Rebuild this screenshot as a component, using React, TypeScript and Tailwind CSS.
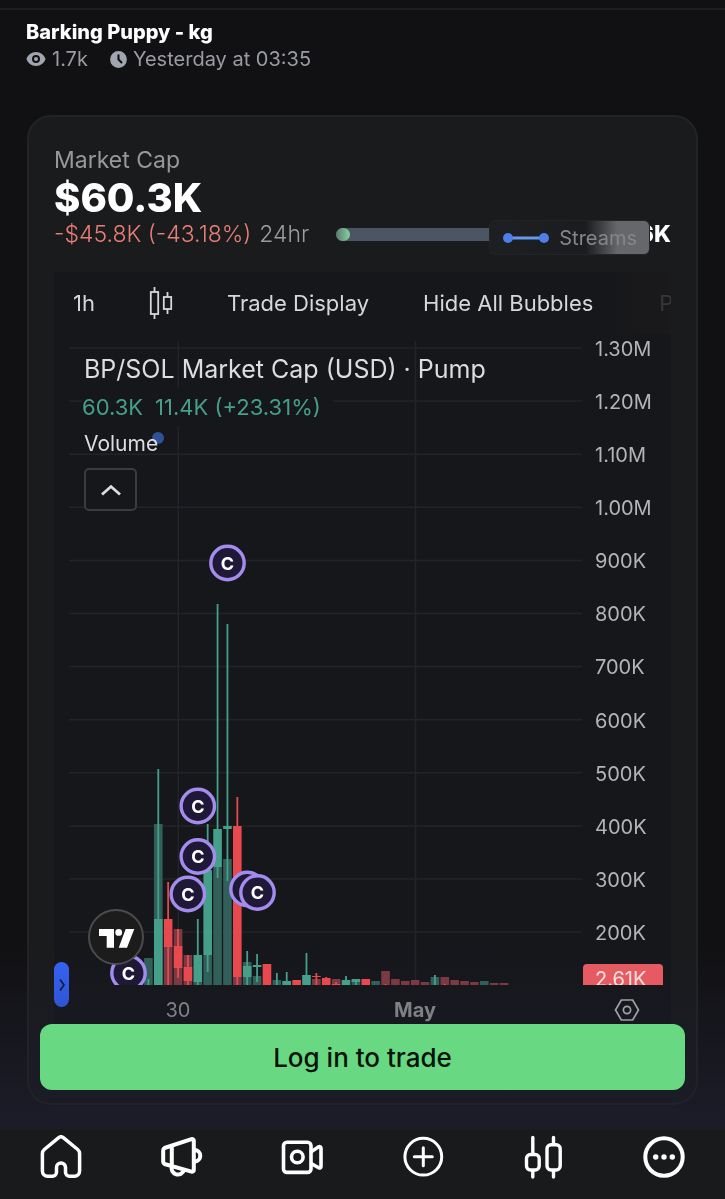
import React from "react";
import { HiClock, HiEye } from "react-icons/hi";

type Tone = "up" | "down";

interface Candle {
  tone: Tone;
  volume?: number;
  body?: [number, number];
  wick?: [number, number];
}

const PLOT_HEIGHT = 651;
const FIRST_X = 94.4;
const STEP = 9.88;
const BAR = 8.6;

const fills = { up: "#459f8a", down: "#e8494e" };
const volumeFills = { up: "#315f59", down: "#7b3a42" };

// All values are y positions inside the plot, volume is the top of the bar
const candles: Candle[] = [
  { tone: "up", volume: 624, wick: [645, 651] },
  { tone: "up", volume: 490, body: [585, 651], wick: [435, 651] },
  { tone: "down", volume: 612, body: [585, 613], wick: [548, 651] },
  { tone: "down", volume: 595, body: [612, 634], wick: [595, 644] },
  { tone: "down", volume: 621, body: [633, 647], wick: [621, 651] },
  { tone: "up", volume: 647, body: [621, 648], wick: [585, 651] },
  { tone: "up", volume: 621, body: [536, 621], wick: [490, 638] },
  { tone: "up", volume: 533, body: [495, 533], wick: [270, 544] },
  { tone: "up", volume: 525, body: [492, 495], wick: [290, 547] },
  { tone: "down", volume: 643, body: [492, 643], wick: [463, 651] },
  { tone: "up", volume: 628, body: [632, 643], wick: [617, 651] },
  { tone: "up", volume: 642, body: [631, 633], wick: [620, 648] },
  { tone: "down", body: [630, 651] },
  { tone: "up", volume: 646, wick: [639, 651] },
  { tone: "up", volume: 647, body: [647, 651], wick: [638, 651] },
  { tone: "down", body: [646, 651] },
  { tone: "up", body: [641, 651], wick: [619, 651] },
  { tone: "down", volume: 645, body: [642, 643], wick: [639, 651] },
  { tone: "down", body: [644, 651], wick: [643, 651] },
  { tone: "down", volume: 645, body: [650, 651], wick: [648, 651] },
  { tone: "up", body: [646, 651], wick: [642, 651] },
  { tone: "up", volume: 646, body: [645, 648], wick: [645, 651] },
  { tone: "down", body: [645, 651] },
  { tone: "up", volume: 647 },
  { tone: "down", volume: 637, wick: [650, 651] },
  { tone: "down", volume: 645 },
  { tone: "down", volume: 647 },
  { tone: "down", volume: 646 },
  { tone: "down", volume: 648 },
  { tone: "up", volume: 643, wick: [641, 651] },
  { tone: "down", volume: 643, wick: [650, 651] },
  { tone: "down", volume: 646 },
  { tone: "down", volume: 647 },
  { tone: "down", volume: 648 },
  { tone: "up", volume: 647 },
  { tone: "down", volume: 649 },
  { tone: "down", volume: 649 },
];

// A stacked bubble sits behind its neighbour and has no letter
const bubbles = [
  { x: 173.5, y: 229 },
  { x: 143.8, y: 472 },
  { x: 143.8, y: 522.5 },
  { x: 133.8, y: 560 },
  { x: 193.5, y: 555, stacked: true },
  { x: 203.5, y: 558.5 },
  { x: 74.5, y: 639 },
];

const prices = [
  "1.30M",
  "1.20M",
  "1.10M",
  "1.00M",
  "900K",
  "800K",
  "700K",
  "600K",
  "500K",
  "400K",
  "300K",
  "200K",
];

const Header: React.FC = () => (
  <header className="border-t-2 border-[#1e1e21] mt-2 px-[26px] pt-2 text-xl">
    <h1 className="font-extrabold leading-7 text-white">Barking Puppy - kg</h1>
    <div className="flex items-center gap-5 leading-[26px] text-[#9a9ca3]">
      <span className="flex items-center gap-1.5">
        <HiEye className="size-5 text-[#a1a5b0]" />
        1.7k
      </span>
      <span className="flex items-center gap-1">
        <HiClock className="size-[21px] text-[#a1a5b0]" />
        Yesterday at 03:35
      </span>
    </div>
  </header>
);

const Summary: React.FC = () => (
  <div>
    <p className="text-[23px] leading-8 text-[#97989b]">Market Cap</p>
    <p className="text-[40px] font-extrabold leading-[44px] text-white">$60.3K</p>
    <div className="relative flex h-7 items-center text-[23px]">
      <span className="font-light text-[#e97d78]">-$45.8K (-43.18%)</span>
      <span className="ml-2 font-light text-[#9b9ca0]">24hr</span>
      <div className="ml-[27px] h-[13px] flex-1 rounded-full bg-[#4b5563]">
        <div className="h-full w-[14px] rounded-full bg-linear-to-r from-[#5d7a70] to-[#86d3a0]" />
      </div>
      <span className="ml-14 font-extrabold text-white">6K</span>
      <div className="absolute right-[21px] top-0 flex h-[35px] w-[161px] items-center justify-between rounded-md border border-[#232427] bg-linear-to-r from-[#1d1f23] from-0% via-[#1b1c1f] via-60% to-[#66676a] to-80% px-3 text-xl text-[#85868a]">
        <svg className="h-3 w-12" viewBox="0 0 48 12" aria-hidden="true">
          <path d="M6 6h36" stroke="#639af0" strokeWidth="3" />
          <circle cx="6" cy="6" r="5" fill="#4e7fe8" />
          <circle cx="42" cy="6" r="5" fill="#4e7fe8" />
        </svg>
        Streams
      </div>
    </div>
  </div>
);

const Toolbar: React.FC = () => (
  <div className="relative flex h-[62px] items-center gap-[54px] overflow-hidden whitespace-nowrap pl-[19px] text-[22px] text-[#d6d7da]">
    <button type="button">1h</button>
    <button type="button" aria-label="Candles" className="shrink-0">
      <svg className="h-8 w-6" viewBox="0 0 24 32" fill="none" stroke="currentColor" strokeWidth="1.8">
        <path d="M5.5 0v5M5.500 27v5M18.500 5v5M18.500 22v5" />
        <rect x="1.800" y="5" width="7.400" height="22" />
        <rect x="14.800" y="10" width="7.400" height="12" />
      </svg>
    </button>
    <button type="button">Trade Display</button>
    <button type="button">Hide All Bubbles</button>
    <button type="button" className="ml-3">P</button>
    <div className="pointer-events-none absolute inset-y-0 right-0 w-[70px] bg-linear-to-r from-transparent to-[#1a191b]/85 to-70%" />
  </div>
);

const Plot: React.FC = () => (
  <svg className="block h-[651px] w-full" role="img" aria-label="Price chart">
    <g stroke="#232429" strokeWidth="1.5">
      {prices.map((price, i) => (
        <line key={price} x1="15" x2="100%" y1={14 + i * 53.1} y2={14 + i * 53.1} />
      ))}
      <line x1="124.3" x2="124.3" y1="7" y2={PLOT_HEIGHT} />
      <line x1="361.5" x2="361.5" y1="7" y2={PLOT_HEIGHT} />
    </g>
    {candles.map((c, i) => {
      const cx = FIRST_X + i * STEP;
      return (
        <g key={i}>
          {c.volume !== undefined && (
            <rect x={cx - BAR / 2} y={c.volume} width={BAR} height={PLOT_HEIGHT - c.volume} fill={volumeFills[c.tone]} />
          )}
          {c.wick && (
            <rect x={cx - 0.9} y={c.wick[0]} width="1.8" height={c.wick[1] - c.wick[0]} fill={fills[c.tone]} />
          )}
          {c.body && (
            <rect x={cx - BAR / 2} y={c.body[0]} width={BAR} height={c.body[1] - c.body[0]} fill={fills[c.tone]} />
          )}
        </g>
      );
    })}
    {bubbles.map((b, i) => (
      <g key={i}>
        <circle cx={b.x} cy={b.y} r="16.7" fill="#1f1836" stroke="#a48cee" strokeWidth="3.4" />
        {!b.stacked && (
          <text x={b.x} y={b.y + 6.5} textAnchor="middle" fontSize="18" fontWeight="700" fill="#fff">
            C
          </text>
        )}
      </g>
    ))}
    <circle cx="62" cy="603" r="27" fill="#1c1c1d" stroke="#4b4b4d" strokeWidth="2" />
    <g fill="#fff">
      <path d="M45 595h15v18.7h-7.3V602H45z" />
      <circle cx="64.7" cy="598.4" r="3.4" />
      <path d="M71.7 595h8.6L73 613.7h-8.3z" />
    </g>
  </svg>
);

const Legend: React.FC = () => (
  <div className="absolute left-7 top-4 text-[#dcdde0]">
    <p className="pl-0.5 text-[25px] leading-[38px]">BP/SOL Market Cap (USD) · Pump</p>
    <p className="inline-flex gap-3 bg-[#16171b] pr-3 text-[22px] leading-[38px] text-[#459f8a]">
      <span>60.3K</span>
      <span>11.4K (+23.31%)</span>
    </p>
    <div className="relative ml-0.5 w-fit text-[21px] leading-9">
      <span className="absolute -right-1.5 top-1.5 size-3 rounded-full bg-[#2f5195]" />
      <span className="relative">Volume</span>
    </div>
    <button
      type="button"
      aria-label="Collapse legend"
      className="ml-0.5 mt-1.5 flex h-[43px] w-[53px] items-center justify-center rounded-[5px] border-2 border-[#3a3b3f] bg-[#16171b]"
    >
      <svg className="h-3 w-5" viewBox="0 0 20 12" fill="none" stroke="currentColor" strokeWidth="2.8">
        <path d="M1 10.500l9-8 9 8" />
      </svg>
    </button>
  </div>
);

const Chart: React.FC = () => (
  <div className="relative mt-6 bg-[#16171b]">
    <Toolbar />
    <div className="flex">
      <div className="relative min-w-0 flex-1">
        <Plot />
        <Legend />
      </div>
      <div className="flex w-[89px] shrink-0 flex-col text-xl text-[#b3b4b8]">
        <div className="mt-[3px] flex h-[608px] flex-col justify-between pl-[13px] leading-6">
          {prices.map((price) => (
            <span key={price}>{price}</span>
          ))}
        </div>
        <div className="ml-px mt-[19px] h-[21px] w-20 overflow-hidden rounded-t-sm bg-[#e65b61] pl-3 leading-[30px] text-[#f6dfe0]">
          2.61K
        </div>
      </div>
    </div>
    <div className="flex h-[39px] items-center">
      <svg className="h-full min-w-0 flex-1 text-xl" fill="#808184" textAnchor="middle">
        <text x="124" y="32">30</text>
        <text x="361" y="32" fontWeight="700">May</text>
      </svg>
      <button type="button" aria-label="Chart settings" className="w-[89px] pl-8 pt-2.5 text-[#a2a3a7]">
        <svg className="h-6 w-[26px]" viewBox="0 0 26 24" fill="none" stroke="currentColor" strokeWidth="1.7">
          <path d="M7.300 2h11.400l5.800 10-5.800 10H7.300L1.500 12z" />
          <circle cx="13" cy="12" r="3.600" />
        </svg>
      </button>
    </div>
    <button
      type="button"
      aria-label="Open drawing tools"
      className="absolute bottom-[17px] left-0 flex h-[45px] w-[15px] items-center justify-center rounded-full bg-linear-to-b from-[#3562f2] to-[#2f55d4]"
    >
      <svg className="h-3.5 w-2" viewBox="0 0 8 14" fill="none" stroke="#10183a" strokeWidth="1.6">
        <path d="M2 1.500L6 7l-4 5.500" />
      </svg>
    </button>
  </div>
);

const NavIcon: React.FC<{ label: string; width?: number; children: React.ReactNode }> = ({
  label,
  width = 3,
  children,
}) => (
  <a href="#" aria-label={label}>
    <svg
      className="h-11 w-[42px]"
      viewBox="0 0 42 44"
      fill="none"
      stroke="currentColor"
      strokeWidth={width}
      strokeLinecap="round"
      strokeLinejoin="round"
    >
      {children}
    </svg>
  </a>
);

const BottomNav: React.FC = () => (
  <nav className="relative flex h-[70px] items-start justify-between bg-[#191a1c] px-10 pt-1.5 text-white">
    <NavIcon label="Home" width={3.5}>
      <path d="M2.4 18.5c0-1.6.7-3 1.9-4L18.4 2.9a4 4 0 0 1 5.2 0l14.1 11.6c1.2 1 1.9 2.4 1.9 4V36a5.2 5.2 0 0 1-5.2 5.2h-4.9a4 4 0 0 1-4-4V32.5a4.500 4.500 0 0 0-9 0v4.700a4 4 0 0 1-4 4H7.600A5.200 5.200 0 0 1 2.400 36z" />
    </NavIcon>
    <NavIcon label="Announcements" width={4}>
      <path d="M3.500 13L30.500 4.200a1.800 1.800 0 0 1 2.300 1.700v29a1.800 1.800 0 0 1-2.300 1.700L3.500 29a2.500 2.500 0 0 1-1.300-2.200V15.200A2.500 2.500 0 0 1 3.500 13zM10.800 11.200v19.500" />
      <path d="M33.500 15a5.500 5.500 0 0 1 0 11.500M10.800 31.500a6.300 6.300 0 0 0 12.200 3.500" />
    </NavIcon>
    <NavIcon label="Livestreams" width={3.6}>
      <rect x="2.500" y="7.200" width="27.500" height="30.200" rx="3.500" />
      <circle cx="16.300" cy="22" r="5.800" />
      <path d="M30.500 16.500l7.200-4.700a1.500 1.500 0 0 1 2.300 1.300v18.400a1.500 1.500 0 0 1-2.300 1.300l-7.200-4.100" />
    </NavIcon>
    <NavIcon label="Create">
      <circle cx="21.300" cy="21.700" r="18.400" />
      <path d="M21.300 12.700v18M12.300 21.700h18" />
    </NavIcon>
    <NavIcon label="Trade" width={3.4}>
      <path d="M10.800 2.500v16M10.800 36v6M31.500 2.500V9M31.500 36v6" />
      <rect x="4.500" y="19.500" width="12.700" height="15.500" rx="4" />
      <rect x="25" y="9.800" width="13.200" height="25.200" rx="4" />
    </NavIcon>
    <NavIcon label="More" width={4}>
      <circle cx="21" cy="22" r="18.700" />
      <g fill="currentColor" stroke="none">
        <circle cx="12.700" cy="22" r="2.700" />
        <circle cx="21" cy="22" r="2.700" />
        <circle cx="29.300" cy="22" r="2.700" />
      </g>
    </NavIcon>
  </nav>
);

export default function App() {
  return (
    <div className="relative flow-root bg-[#111113] font-[Inter,sans-serif]">
      <Header />
      <main className="px-[27px] pb-6 pt-[43px]">
        <section className="rounded-3xl border-2 border-[#222326] bg-[#1a1b1c] pb-[13px] pt-[27px]">
          <div className="px-[25px]">
            <Summary />
            <Chart />
          </div>
          <div className="relative z-10 px-[11px]">
            <button
              type="button"
              className="h-[66px] w-full rounded-xl bg-[#68d982] text-[26px] font-medium text-[#07120a]"
            >
              Log in to trade
            </button>
          </div>
        </section>
      </main>
      {/* Tint above the nav, only lightens the dark surfaces */}
      <div className="pointer-events-none absolute inset-x-0 bottom-[70px] h-[190px] bg-linear-to-b from-[#1b1c27]/0 to-[#1b1c27] to-90% mix-blend-lighten" />
      <BottomNav />
    </div>
  );
}
